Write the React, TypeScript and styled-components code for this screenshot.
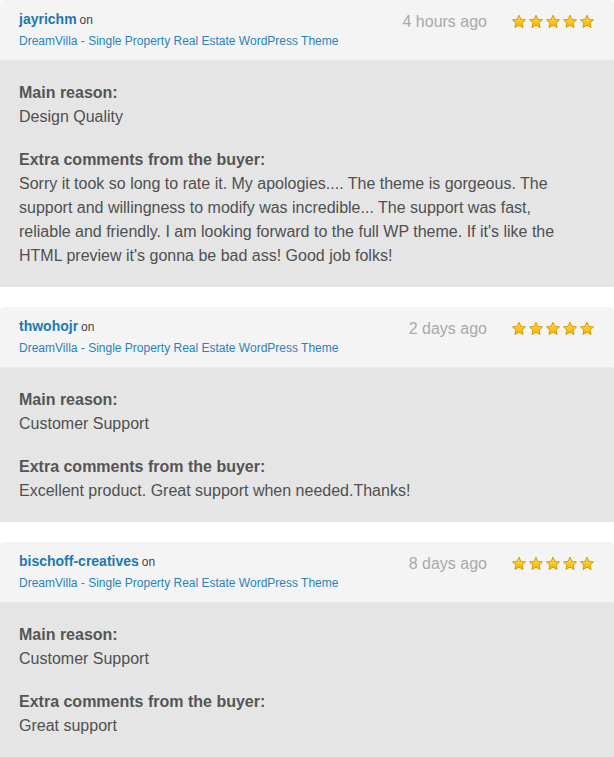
import React from 'react'
import styled, { createGlobalStyle } from 'styled-components'

const GlobalStyle = createGlobalStyle`
  html, body {
    margin: 0;
    padding: 0;
    background: #ffffff;
  }
  body {
    font-family: "Liberation Sans", Arial, Helvetica, sans-serif;
  }
`;

const List = styled.div`
  display: flex;
  flex-direction: column;
  gap: 20px;
  width: 614px;
`;

const Card = styled.div`
  display: flex;
  flex-direction: column;
`;

const Header = styled.div`
  display: flex;
  justify-content: space-between;
  align-items: flex-start;
  padding: 10px 19px 10px 19px;
  background: #f4f4f4;
  border-bottom: 1px solid #e9e9e9;
  border-radius: 4px 4px 0 0;
`;

const Who = styled.div`
  display: flex;
  flex-direction: column;
  gap: 3px;
`;

const UserLine = styled.div`
  line-height: 18px;
  font-size: 12px;
  color: #444;
`;

const UserName = styled.a`
  font-size: 14px;
  font-weight: bold;
  color: #2178b0;
  text-decoration: none;
  margin-right: 3px;
`;

const ItemLink = styled.a`
  font-size: 12px;
  line-height: 18px;
  color: #2a82bd;
  text-decoration: none;
`;

const Meta = styled.div`
  display: flex;
  align-items: center;
  gap: 24px;
  height: 24px;
`;

const Time = styled.span`
  font-size: 16px;
  color: #a9a9a9;
`;

const Stars = styled.div`
  display: flex;
  gap: 1px;
  margin-top: -1px;
`;

const Body = styled.div`
  background: #e5e5e5;
  padding: 20px 19px 19px 19px;
  color: #505050;
  font-size: 16px;
  line-height: 24px;
`;

const Section = styled.div`
  max-width: 548px;
  & + & {
    margin-top: 19px;
  }
`;

const Label = styled.div`
  font-weight: bold;
  color: #555;
`;

const Text = styled.div``;

function Star() {
  return (
    <svg width="16" height="16" viewBox="0 0 16 16">
      <defs>
        <linearGradient id="sg" x1="0" y1="0" x2="0" y2="1">
          <stop offset="0" stopColor="#ffdc4a" />
          <stop offset="1" stopColor="#f5b400" />
        </linearGradient>
      </defs>
      <path
        d="M8 1.2 L9.95 5.4 L14.5 5.9 L11.1 9 L12.05 13.5 L8 11.2 L3.95 13.5 L4.9 9 L1.5 5.9 L6.05 5.4 Z"
        fill="url(#sg)"
        stroke="#d89a0a"
        strokeWidth="1"
        strokeLinejoin="round"
      />
    </svg>
  );
}

type Review = {
  user: string;
  time: string;
  reason: string;
  comment: string;
};

const reviews: Review[] = [
  {
    user: 'jayrichm',
    time: '4 hours ago',
    reason: 'Design Quality',
    comment:
      "Sorry it took so long to rate it. My apologies.... The theme is gorgeous. The support and willingness to modify was incredible... The support was fast, reliable and friendly. I am looking forward to the full WP theme. If it's like the HTML preview it's gonna be bad ass! Good job folks!",
  },
  {
    user: 'thwohojr',
    time: '2 days ago',
    reason: 'Customer Support',
    comment: 'Excellent product. Great support when needed.Thanks!',
  },
  {
    user: 'bischoff-creatives',
    time: '8 days ago',
    reason: 'Customer Support',
    comment: 'Great support',
  },
];

function ReviewCard({ review }: { review: Review }) {
  return (
    <Card>
      <Header>
        <Who>
          <UserLine>
            <UserName href="#">{review.user}</UserName>on
          </UserLine>
          <ItemLink href="#">DreamVilla - Single Property Real Estate WordPress Theme</ItemLink>
        </Who>
        <Meta>
          <Time>{review.time}</Time>
          <Stars>
            {[0, 1, 2, 3, 4].map((i) => (
              <Star key={i} />
            ))}
          </Stars>
        </Meta>
      </Header>
      <Body>
        <Section>
          <Label>Main reason:</Label>
          <Text>{review.reason}</Text>
        </Section>
        <Section>
          <Label>Extra comments from the buyer:</Label>
          <Text>{review.comment}</Text>
        </Section>
      </Body>
    </Card>
  );
}

export default function App() {
  return (
    <>
      <GlobalStyle />
      <List>
        {reviews.map((r, i) => (
          <ReviewCard key={i} review={r} />
        ))}
      </List>
    </>
  );
}
